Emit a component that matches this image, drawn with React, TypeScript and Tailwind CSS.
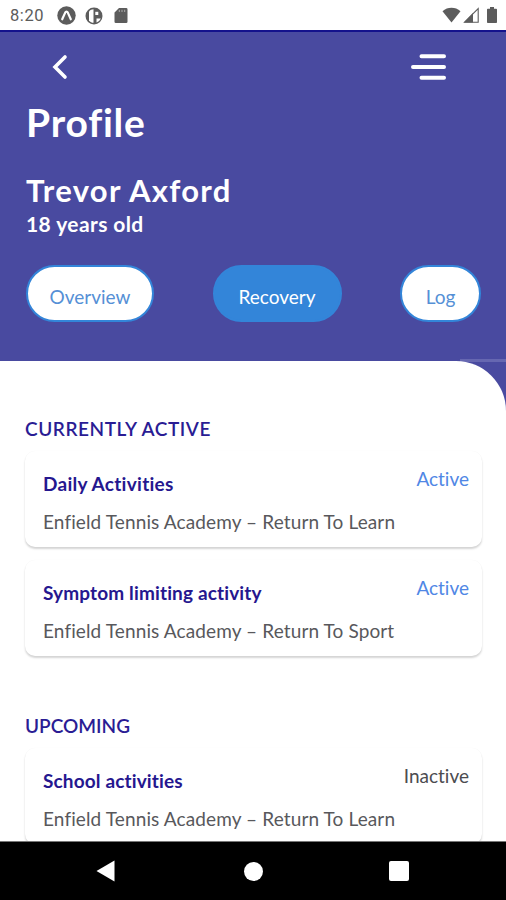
import React from 'react';
import clsx from 'clsx';

type Activity = {
  title: string;
  place: string;
  status: 'Active' | 'Inactive';
  titleClass: string;
};

const ACTIVE: Activity[] = [
  { title: 'Daily Activities', place: 'Enfield Tennis Academy – Return To Learn', status: 'Active', titleClass: 'tracking-[0.28px]' },
  { title: 'Symptom limiting activity', place: 'Enfield Tennis Academy – Return To Sport', status: 'Active', titleClass: 'tracking-[0.14px]' },
];

const UPCOMING: Activity[] = [
  { title: 'School activities', place: 'Enfield Tennis Academy – Return To Learn', status: 'Inactive', titleClass: 'tracking-[0.14px]' },
];

const StatusBar = () => (
  <div className="flex h-[30px] shrink-0 items-center bg-white pr-[9px] pl-[10px] text-[#5c5c5c]">
    <span className="w-[47px] pt-[2px] font-[Roboto] text-[16.5px] leading-none tracking-[0.6px]">8:20</span>
    {/* Expo */}
    <svg className="mt-[1px] h-[19px] w-[19px]" viewBox="0 0 19 19">
      <circle cx="9.5" cy="9.5" r="9.2" fill="currentColor" />
      <path d="M5.200 13.300 8.200 6.600c.6-1.200 2-1.200 2.600 0l3 6.700" fill="none" stroke="#fff" strokeWidth="2.200" strokeLinecap="round" />
    </svg>
    <svg className="mt-[1px] ml-[9px] h-[18px] w-[18px]" viewBox="0 0 18 18">
      <circle cx="9" cy="9" r="8.500" fill="currentColor" />
      <path d="M4 4.500C5 3 7 2.200 8.500 2.200V15.800C7 15.800 5 15 4 13.500z" fill="#fff" />
      <path d="M10.300 4.800h3v3.200h-3z" fill="#fff" />
      <path d="M11.500 11.500h4.300c-.8 2-2.300 3.300-4.300 4z" fill="#fff" />
    </svg>
    {/* SD card */}
    <svg className="mt-[1px] ml-[11px] h-[17px] w-[14px]" viewBox="0 0 14 17">
      <path d="M5 1h7.200A1.300 1.300 0 0 1 13.500 2.300V14.700A1.300 1.300 0 0 1 12.200 16H1.800A1.300 1.300 0 0 1 .5 14.700V5.500z" fill="currentColor" />
      <path d="M5.300 2.800v2.200M8 2.800v2.200M10.700 2.800v2.200" stroke="#aaa" strokeWidth="1" />
    </svg>
    <svg className="ml-auto h-[16px] w-[19px]" viewBox="0 0 19 16">
      <path d="M9.500 15.500.5 4.200C5.600-.4 13.400-.4 18.500 4.200z" fill="currentColor" />
    </svg>
    <svg className="ml-[2px] h-[16px] w-[16px]" viewBox="0 0 16 16">
      <path d="M15.200 1.500v13.700H1.500z" fill="none" stroke="currentColor" strokeWidth="1.100" />
      <path d="M10 6v9.500H1z" fill="currentColor" />
    </svg>
    <svg className="ml-[8px] h-[16px] w-[10px]" viewBox="0 0 10 16">
      <path d="M3 0h4v1.800h2.200c.4 0 .8.300.8.800v12.600c0 .5-.3.800-.8.800H.8c-.5 0-.8-.3-.8-.8V2.600c0-.5.300-.8.800-.8H3z" fill="currentColor" />
    </svg>
  </div>
);

const Tab: React.FC<{ label: string; active?: boolean; className: string }> = ({ label, active, className }) => (
  <button
    type="button"
    className={clsx(
      'flex h-[57px] items-center justify-center rounded-full border-2 border-[#3385d9] pt-[5px] text-[19px] leading-none',
      active ? 'bg-[#3385d9] text-white' : 'bg-white text-[#5590d6]',
      className
    )}
  >
    {label}
  </button>
);

const ActivityCard: React.FC<{ item: Activity }> = ({ item }) => (
  <div className="h-[96px] rounded-[10px] bg-white pr-[13px] pl-[18px] shadow-[0_2px_2px_rgba(0,0,0,0.17),0_0_1px_rgba(0,0,0,0.05)]">
    <div className="flex justify-between pt-[18px] leading-[24px]">
      <span className={clsx('mt-[3px] text-[19px] font-bold text-[#25178f]', item.titleClass)}>{item.title}</span>
      <span
        className={clsx(
          '-mt-[2px] text-[19px]',
          item.status === 'Active' ? 'text-[#5087e5]' : 'text-[#4c4c50]'
        )}
      >
        {item.status}
      </span>
    </div>
    <p className="mt-[14px] text-[19px] leading-[24px] tracking-[0.12px] whitespace-nowrap text-[#58585c]">{item.place}</p>
  </div>
);

const SectionTitle: React.FC<{ children: string; className?: string }> = ({ children, className }) => (
  <h3 className={clsx('text-[19px] leading-[24px] font-semibold text-[#2a1c94]', className)}>{children}</h3>
);

const NavBar = () => (
  <div className="flex h-[59px] shrink-0 items-center border-t border-[#777] bg-black pl-[96px]">
    <svg className="h-[22px] w-[19px]" viewBox="0 0 19 22">
      <path d="M18.500.5v21L.500 11z" fill="#fff" />
    </svg>
    <span className="ml-[129px] h-[19px] w-[19px] rounded-full bg-white" />
    <span className="ml-[126px] h-[20px] w-[20px] rounded-[2px] bg-white" />
  </div>
);

export default function App() {
  return (
    <div className="flex h-[900px] w-[506px] flex-col overflow-hidden bg-white font-[Lato,sans-serif] [font-variant-ligatures:none]">
      <StatusBar />

      <header className="h-[331px] shrink-0 border-t-2 border-[#14128c] bg-[#494aa0] pr-[25px] pl-[26px] text-white">
        <div className="flex h-[70px] items-center justify-between pr-[35px] pl-[26px]">
          <svg className="h-[26px] w-[16px]" viewBox="0 0 16 26">
            <path d="M13 3 3 13 13 23" fill="none" stroke="#fff" strokeWidth="3.600" strokeLinecap="round" />
          </svg>
          <svg className="h-[28px] w-[35px]" viewBox="0 0 35 28">
            <path d="M10.500 3.300h22.500M2 14h31M10.500 24.700h22.500" fill="none" stroke="#fff" strokeWidth="4" strokeLinecap="round" />
          </svg>
        </div>
        <h1 className="text-[39px] leading-[40px] font-bold tracking-[0.8px]">Profile</h1>
        <h2 className="mt-[30px] text-[31px] leading-[36px] font-bold tracking-[1.3px]">Trevor Axford</h2>
        <p className="mt-[3px] text-[21px] leading-[26px] font-bold tracking-[0.4px]">18 years old</p>
        <div className="mt-[28px] flex justify-between">
          <Tab label="Overview" className="w-[128px]" />
          <Tab label="Recovery" active className="w-[129px]" />
          <Tab label="Log" className="w-[81px]" />
        </div>
      </header>

      <div className="relative flex min-h-0 grow flex-col bg-[#494aa0]">
        {/* hairline seam above the rounded corner */}
        <div className="absolute -top-[2px] right-0 h-[3px] w-[46px] bg-[#6667b1]" />
        <main className="relative min-h-0 grow overflow-hidden rounded-tr-[50px] bg-white px-[25px] pt-[56px]">
          <SectionTitle className="tracking-[0.55px]">CURRENTLY ACTIVE</SectionTitle>
          <div className="mt-[10px] -mr-[1px] flex flex-col gap-[13px]">
            {ACTIVE.map((item) => (
              <ActivityCard key={item.title} item={item} />
            ))}
          </div>
          <SectionTitle className="mt-[58px]">UPCOMING</SectionTitle>
          <div className="mt-[10px] -mr-[1px] flex flex-col">
            {UPCOMING.map((item) => (
              <ActivityCard key={item.title} item={item} />
            ))}
          </div>
        </main>
      </div>

      <NavBar />
    </div>
  );
}
